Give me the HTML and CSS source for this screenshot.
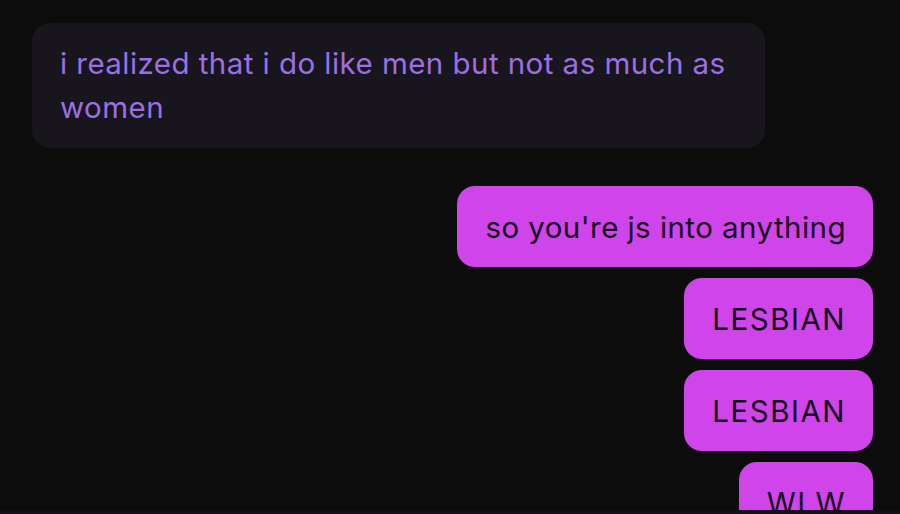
FILE: index.html
```html
<!DOCTYPE html>
<html lang="en">
<head>
<meta charset="utf-8">
<title>Chat</title>
<link rel="stylesheet" href="styles.css">
</head>
<body>
<div class="viewport">
  <div class="chat">
    <div class="msg received">i realized that i do like men but not as much as women</div>
    <div class="sent-group">
      <div class="msg sent">so you're js into anything</div>
      <div class="msg sent caps">LESBIAN</div>
      <div class="msg sent caps">LESBIAN</div>
      <div class="msg sent caps">WLW</div>
    </div>
  </div>
  <div class="bottom-strip"></div>
</div>
</body>
</html>
```
FILE: styles.css
```css
html, body {
  margin: 0;
  padding: 0;
  background: #0c0c0c;
}
.viewport {
  width: 900px;
  height: 514px;
  overflow: hidden;
  display: flex;
  flex-direction: column;
}
.chat {
  flex: 1;
  min-height: 0;
  overflow: hidden;
  display: flex;
  flex-direction: column;
  align-items: flex-start;
  padding: 23px 27px 0 32px;
  font-family: Inter, "Noto Sans", sans-serif;
  font-size: 29.5px;
  line-height: 44px;
  letter-spacing: 0.45px;
}
.msg {
  border-radius: 18px;
  padding: 18px 28px 19px;
  box-sizing: border-box;
}
.received {
  max-width: 733px;
  background: #18161c;
  color: #9b70e3;
}
.sent-group {
  margin-top: 38px;
  align-self: stretch;
  display: flex;
  flex-direction: column;
  align-items: flex-end;
  gap: 11px;
}
.sent {
  background: #cf45e9;
  color: #16071b;
  padding: 19px 27px 18px 28px;
}
.caps {
  letter-spacing: 1.5px;
}
.bottom-strip {
  height: 4px;
  flex: none;
  background: #0e1116;
}
```
